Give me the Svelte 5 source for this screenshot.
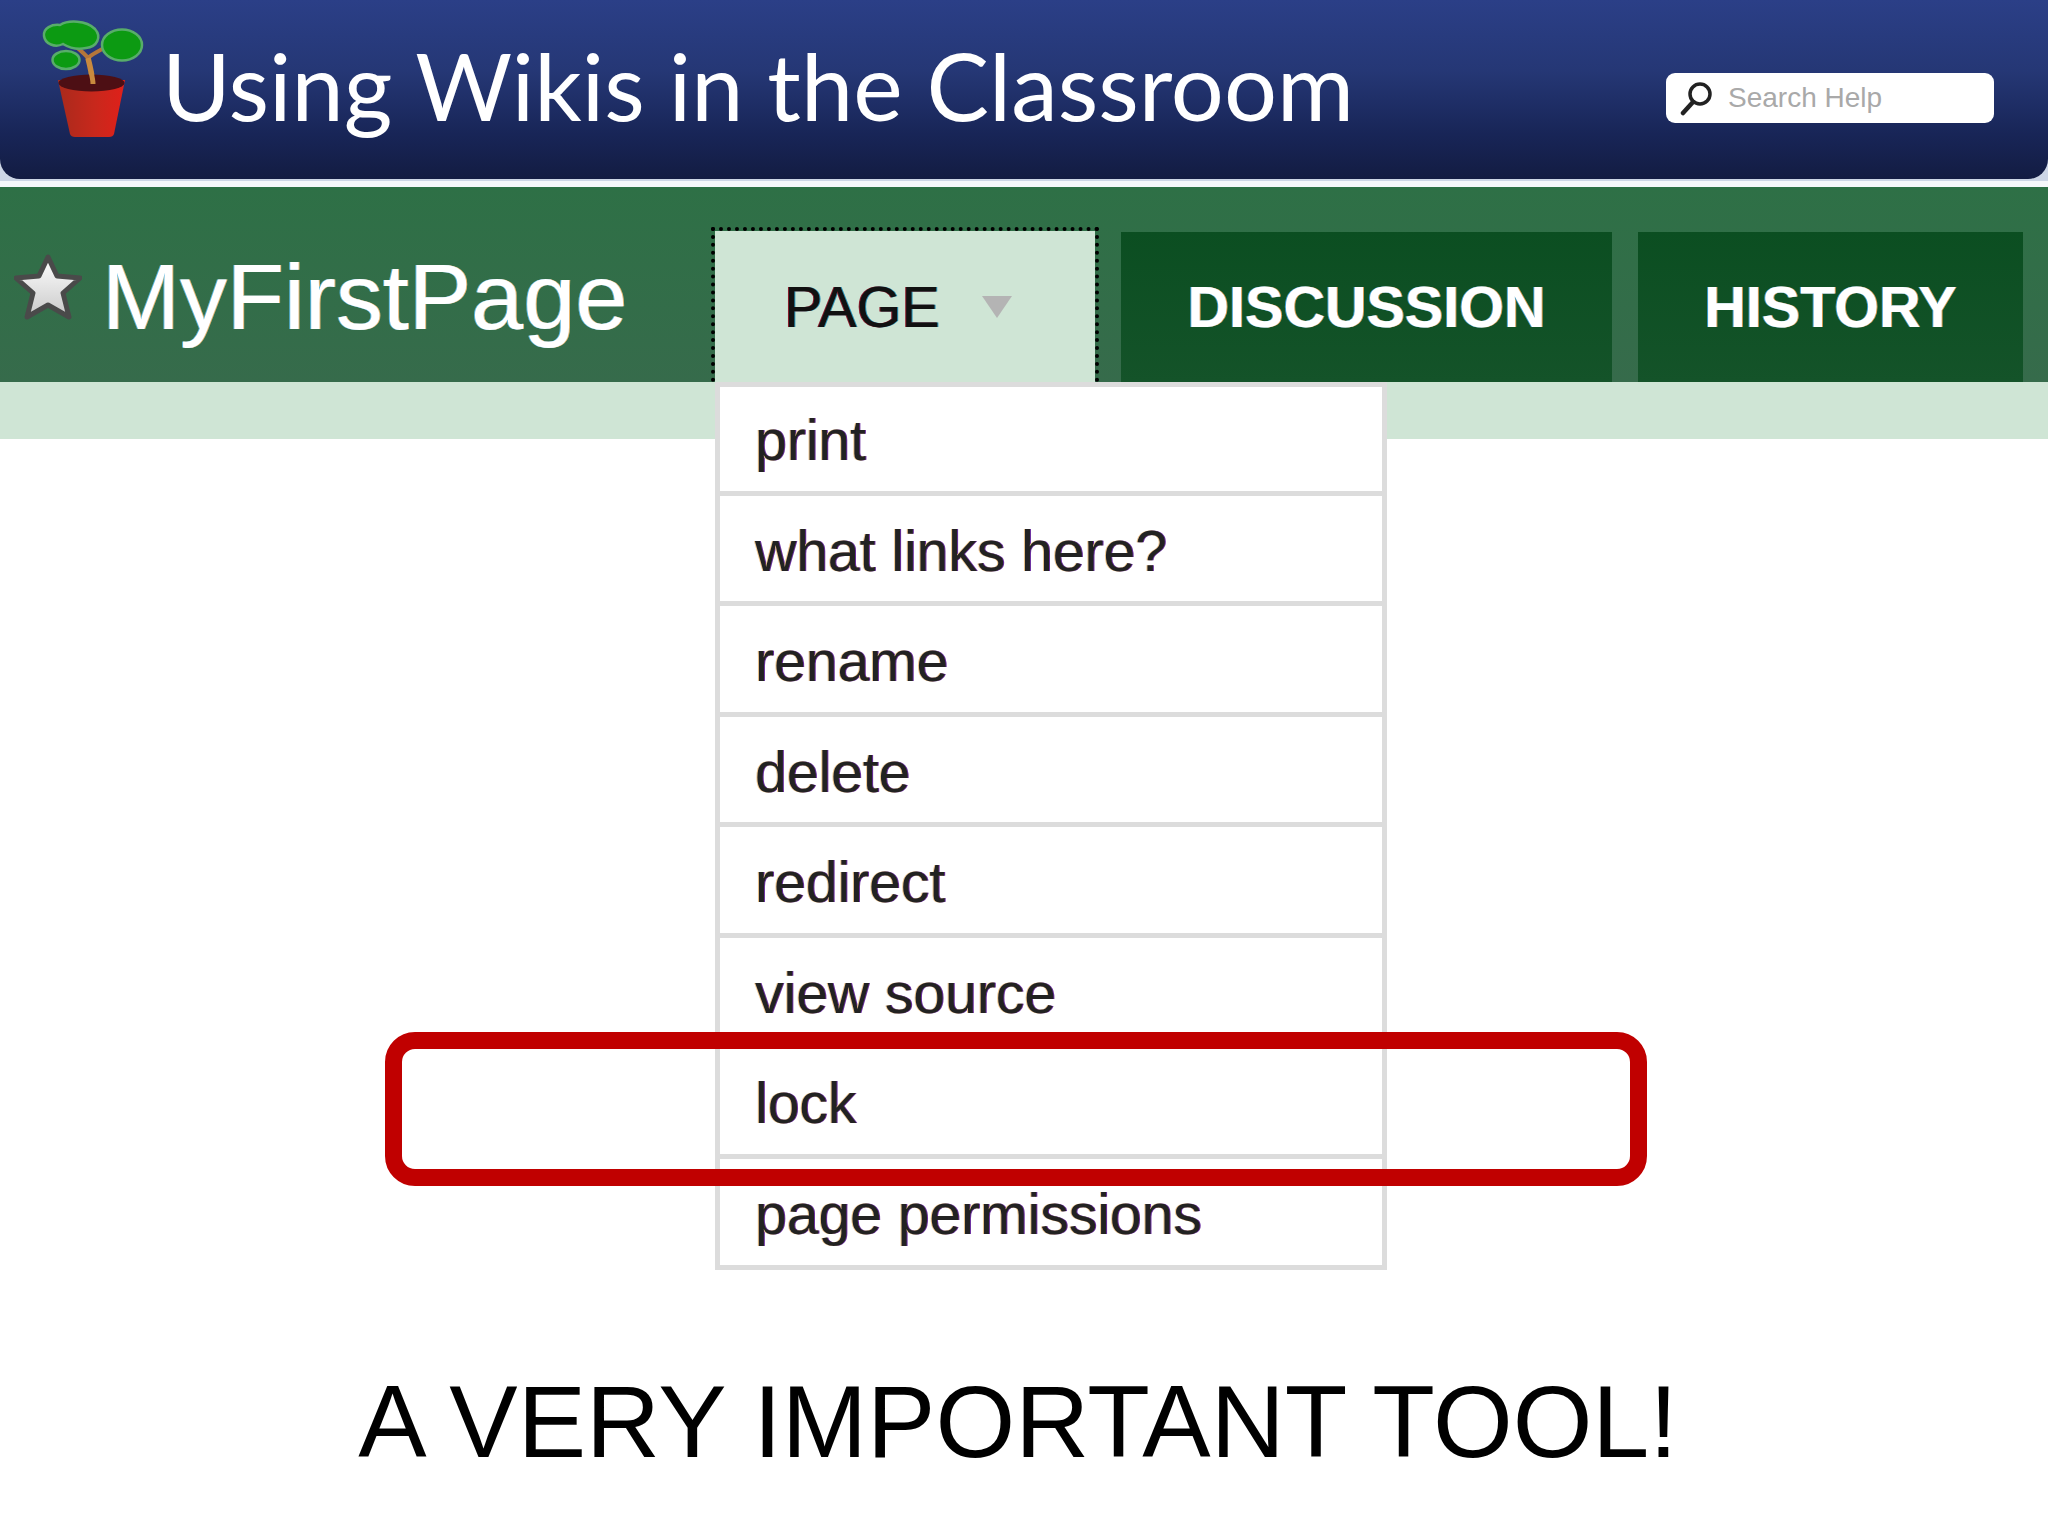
<script>
  const menuItems = ['print', 'what links here?', 'rename', 'delete', 'redirect', 'view source', 'lock', 'page permissions'];
</script>

<div class="page">
  <div class="site-wrap">
    <header class="site-bar">
      <svg class="logo" viewBox="0 0 120 130" width="120" height="130" aria-hidden="true">
        <defs>
          <linearGradient id="potFill" x1="0" x2="1" y1="0" y2="0">
            <stop offset="0" stop-color="#a92a1c" />
            <stop offset="0.55" stop-color="#c8281c" />
            <stop offset="1" stop-color="#e0201a" />
          </linearGradient>
        </defs>
        <path d="M44 33 C50 38 55 42 58 46 M72 37 C68 40 62 42 58 46" fill="none" stroke="#b5763a" stroke-width="4" stroke-linecap="round" />
        <path d="M63 72 C62 62 60 54 58 46" fill="none" stroke="#c98a3e" stroke-width="5.5" />
        <path d="M14 24 C13 16 22 12 30 13 C38 8 56 8 65 17 C72 25 67 35 56 36 C47 38 38 35 33 32 C25 36 15 32 14 24 Z" fill="#0c9a12" stroke="#58ad6a" stroke-width="2.5" />
        <ellipse cx="92" cy="33" rx="20" ry="15.5" fill="#0c9a12" stroke="#58ad6a" stroke-width="2.5" />
        <ellipse cx="36" cy="48" rx="13.5" ry="9" fill="#0c9a12" stroke="#58ad6a" stroke-width="2.5" />
        <path d="M28 68 H95 L84 122 Q83 125 79 125 H45 Q41 125 40 122 Z" fill="url(#potFill)" />
        <ellipse cx="61.5" cy="71" rx="33" ry="8.5" fill="#4d0f14" />
        <path d="M63 72 C63 68 62 64 61 60" fill="none" stroke="#c98a3e" stroke-width="5" />
      </svg>
      <h1 class="site-title">Using Wikis in the Classroom</h1>
      <div class="search">
        <svg viewBox="0 0 36 36" width="36" height="36" aria-hidden="true">
          <circle cx="20" cy="14" r="10" fill="#fff" stroke="#222" stroke-width="3.5" />
          <path d="M13 22 L3 33" stroke="#222" stroke-width="4.5" stroke-linecap="round" />
        </svg>
        <span class="search-hint">Search Help</span>
      </div>
    </header>
  </div>

  <nav class="page-bar">
    <div class="page-name">
      <svg class="star" viewBox="0 0 68 68" width="68" height="68" aria-hidden="true">
        <defs>
          <linearGradient id="starFill" x1="0" x2="0" y1="0" y2="1">
            <stop offset="0" stop-color="#fff" />
            <stop offset="1" stop-color="#c9c9c9" />
          </linearGradient>
        </defs>
        <path d="M34 3 L43 22 L66 24 L49 39 L55 63 L34 51 L13 63 L19 39 L2 24 L25 22 Z" fill="url(#starFill)" stroke="#4a4a4a" stroke-width="5" stroke-linejoin="round" />
      </svg>
      <span class="page-label">MyFirstPage</span>
    </div>
    <div class="tabs">
      <div class="tab active">
        <span>PAGE</span>
        <i class="caret"></i>
        <ul class="menu">
          {#each menuItems as item}
            <li>{item}</li>
          {/each}
        </ul>
      </div>
      <div class="tab discussion">DISCUSSION</div>
      <div class="tab history">HISTORY</div>
    </div>
  </nav>

  <div class="sub-bar"></div>

  <main class="content">
    <p class="caption">A VERY IMPORTANT TOOL!</p>
  </main>

  <div class="callout"></div>
</div>

<style>
  :global(body) {
    background: #fff;
  }

  .page {
    position: relative;
    width: 2048px;
    height: 1536px;
    overflow: hidden;
    background: #fff;
    font-family: "Liberation Sans", Arial, sans-serif;
  }

  .site-wrap {
    height: 181px;
    background: #cdd6e6;
    border-bottom: 6px solid #f6f8fb;
  }

  .site-bar {
    display: flex;
    align-items: center;
    height: 179px;
    padding: 0 54px 0 30px;
    box-sizing: border-box;
    background: linear-gradient(#2b3f87 0%, #253775 40%, #182557 75%, #131c42 100%);
    border-radius: 0 0 20px 20px;
  }

  .logo {
    flex: none;
    margin-top: -26px;
  }

  .site-title {
    flex: 1;
    margin: -7px 0 0 12px;
    color: #fff;
    font-family: Lato, "Open Sans", sans-serif;
    font-weight: 400;
    font-size: 93.6px;
    line-height: 1;
    white-space: nowrap;
  }

  .search {
    display: flex;
    align-items: center;
    gap: 12px;
    width: 328px;
    height: 50px;
    margin-top: 16px;
    padding-left: 14px;
    box-sizing: border-box;
    background: #fff;
    border-radius: 9px;
  }

  .search-hint {
    color: #a9a9a9;
    font-size: 28px;
  }

  .page-bar {
    display: flex;
    align-items: flex-end;
    justify-content: space-between;
    height: 195px;
    padding-right: 25px;
    box-sizing: border-box;
    background: linear-gradient(#2e7046, #366b4b);
  }

  .page-name {
    display: flex;
    align-items: center;
    gap: 20px;
    margin: 0 0 38px 14px;
  }

  .star {
    margin-bottom: 18px;
  }

  .page-label {
    color: #fff;
    font-size: 93.6px;
    line-height: 1;
    text-shadow: -1px 0 #58b4de, 1px 0 #e3b673;
  }

  .tabs {
    display: flex;
    align-items: flex-end;
    gap: 26px;
  }

  .tab {
    display: flex;
    align-items: center;
    justify-content: center;
    height: 150px;
    box-sizing: border-box;
    background: linear-gradient(#0b4e21, #145329);
    color: #fff;
    font-size: 57.5px;
    font-weight: 700;
    text-shadow: -1px 0 #3a9bd0, 1px 0 #d69b4e;
  }

  .tab.active {
    position: relative;
    gap: 42px;
    width: 388px;
    height: 155px;
    margin-right: -4px;
    padding-right: 14px;
    border: 4px dotted #000;
    border-bottom: 0;
    background: #cfe5d5;
    background-clip: padding-box;
    color: #111;
    font-weight: 400;
    font-size: 57.5px;
    text-shadow: -1px 0 #8a1c2c, 1px 0 #2a93b8;
  }

  .caret {
    width: 0;
    height: 0;
    border-left: 15px solid transparent;
    border-right: 15px solid transparent;
    border-top: 22px solid #b4b4b4;
  }

  .discussion {
    width: 491px;
  }

  .history {
    width: 385px;
  }

  .menu {
    position: absolute;
    top: 100%;
    left: 0;
    width: 672px;
    margin: 0;
    padding: 0;
    box-sizing: border-box;
    list-style: none;
    background: #fff;
    border: 5px solid #dcdcdc;
    border-bottom: 0;
    color: #222;
    font-size: 57px;
    font-weight: 400;
    text-shadow: -1px 0 #f0c890, 1px 0 #6a2fa0;
  }

  .menu li {
    height: 110.6px;
    padding-left: 35px;
    box-sizing: border-box;
    border-bottom: 5px solid #dcdcdc;
    line-height: 111px;
  }

  .menu li:first-child {
    height: 108.5px;
    line-height: 106px;
  }

  .sub-bar {
    height: 57px;
    background: #cfe5d5;
  }

  .content {
    display: flex;
    justify-content: center;
    padding: 932px 12px 0 0;
  }

  .caption {
    margin: 0;
    color: #000;
    font-size: 102.5px;
    line-height: 1;
    white-space: nowrap;
  }

  .callout {
    position: absolute;
    left: 385px;
    top: 1032px;
    width: 1262px;
    height: 154px;
    box-sizing: border-box;
    border: 17px solid #c00000;
    border-radius: 30px;
  }
</style>
